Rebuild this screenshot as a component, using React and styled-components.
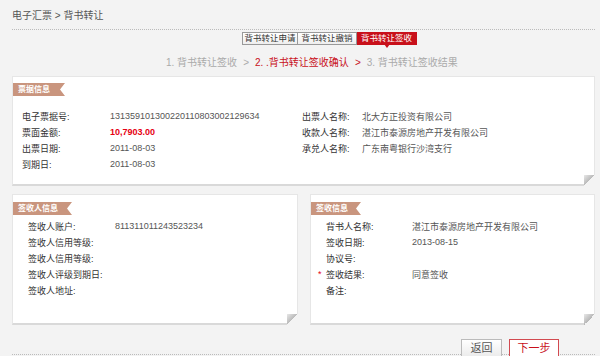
import styled, { createGlobalStyle } from 'styled-components'

const GlobalStyle = createGlobalStyle`
    html, body {
        margin: 0;
        padding: 0;
        background: #f3f3f3;
    }
    body {
        width: 600px;
        height: 356px;
        overflow: hidden;
        font-family: "Liberation Sans", "Noto Sans CJK SC", sans-serif;
    }
`;

const colors = {
    red: '#c8101a',
    ribbon: '#c9957e',
    label: '#333',
    value: '#555',
    muted: '#aaa',
};

const Wrapper = styled.div`
    display: flex;
    flex-direction: column;
    padding: 0 5px 0 12px;
`;

const Breadcrumb = styled.div`
    height: 30px;
    box-sizing: border-box;
    padding-top: 9px;
    font-size: 10px;
    line-height: 14px;
    color: #555;
    border-bottom: 1px dotted #bbb;
`;

const Tabs = styled.div`
    display: flex;
    margin-top: 2px;
    margin-left: 230px;
`;

const Tab = styled.div`
    position: relative;
    width: ${p => p.width}px;
    height: 13px;
    box-sizing: border-box;
    font-size: 8.5px;
    line-height: 11px;
    text-align: center;
    color: ${p => (p.active ? '#fff' : '#333')};
    background: ${p => (p.active ? colors.red : 'linear-gradient(#fff, #eee)')};
    border: 1px solid ${p => (p.active ? colors.red : '#999')};
    & + & {
        border-left: none;
    }
    ${p => p.active && `
        &::after {
            content: '';
            position: absolute;
            left: 50%;
            bottom: -4px;
            margin-left: -3px;
            border-left: 3px solid transparent;
            border-right: 3px solid transparent;
            border-top: 4px solid ${colors.red};
        }
    `}
`;

const Steps = styled.div`
    display: flex;
    gap: 6px;
    margin-top: 11px;
    margin-left: 154px;
    font-size: 10px;
    line-height: 14px;
    color: ${colors.muted};
`;

const Step = styled.span`
    color: ${p => (p.active ? colors.red : colors.muted)};
`;

const Panel = styled.div`
    position: relative;
    background: #fff;
    border: 1px solid #e6e6e6;
    border-bottom: 2px solid #d9d9d9;
    box-sizing: border-box;
    width: ${p => p.width || 583}px;
    height: ${p => p.height}px;
    padding-top: ${p => p.padTop}px;
    &::after {
        content: '';
        position: absolute;
        right: -1px;
        bottom: -2px;
        width: 11px;
        height: 11px;
        background: linear-gradient(315deg, #f3f3f3 50%, #b8b8b8 50%, #e8e8e8 100%);
    }
`;

const TopPanel = styled(Panel)`
    margin-top: 6px;
`;

const Ribbon = styled.div`
    width: ${p => p.width}px;
    height: 13px;
    padding-left: 5px;
    box-sizing: border-box;
    background: ${colors.ribbon};
    color: #fff;
    font-size: 8px;
    font-weight: bold;
    line-height: 13px;
    clip-path: polygon(0 0, 100% 0, calc(100% - 5px) 50%, 100% 100%, 0 100%);
`;

const InfoGrid = styled.div`
    display: grid;
    grid-template-columns: 280px 1fr;
    margin-top: 12px;
    padding-left: 9px;
`;

const Column = styled.div`
    display: flex;
    flex-direction: column;
`;

const Row = styled.div`
    position: relative;
    display: flex;
    height: 16px;
    align-items: center;
    font-size: 9px;
`;

const Label = styled.span`
    width: ${p => p.width}px;
    flex: none;
    color: ${colors.label};
`;

const Value = styled.span`
    color: ${p => (p.highlight ? '#e60012' : colors.value)};
    font-weight: ${p => (p.highlight ? 'bold' : 'normal')};
`;

const Required = styled.span`
    position: absolute;
    left: -8px;
    top: 3px;
    color: #e60012;
    font-size: 9px;
`;

const LowerRow = styled.div`
    display: flex;
    gap: 12px;
    margin-top: 8px;
`;

const FieldList = styled.div`
    display: flex;
    flex-direction: column;
    margin-top: 3px;
    padding-left: ${p => p.indent}px;
`;

const Footer = styled.div`
    display: flex;
    justify-content: flex-end;
    gap: 7px;
    height: 15px;
    margin-top: 14px;
    padding-right: 36px;
    border-bottom: 1px dotted #bbb;
`;

const Button = styled.div`
    width: ${p => p.width}px;
    height: 17px;
    flex: none;
    box-sizing: border-box;
    font-size: 11px;
    line-height: 16px;
    text-align: center;
    background: ${p => (p.primary ? '#fff' : 'linear-gradient(#fff, #ececec)')};
    color: ${p => (p.primary ? colors.red : '#555')};
    border: 1px solid ${p => (p.primary ? '#d24a50' : '#bbb')};
    border-bottom: none;
`;

const billLeft = [
    ['电子票据号:', '131359101300220110803002129634'],
    ['票面金额:', '10,7903.00', true],
    ['出票日期:', '2011-08-03'],
    ['到期日:', '2011-08-03'],
];

const billRight = [
    ['出票人名称:', '北大方正投资有限公司'],
    ['收款人名称:', '湛江市泰源房地产开发有限公司'],
    ['承兑人名称:', '广东南粤银行沙湾支行'],
];

const receiver = [
    ['签收人账户:', '811311011243523234'],
    ['签收人信用等级:', ''],
    ['签收人信用等级:', ''],
    ['签收人评级到期日:', ''],
    ['签收人地址:', ''],
];

const signInfo = [
    ['背书人名称:', '湛江市泰源房地产开发有限公司'],
    ['签收日期:', '2013-08-15'],
    ['协议号:', ''],
    ['签收结果:', '同意签收', false, true],
    ['备注:', ''],
];

function Fields({ rows, labelWidth }) {
    return rows.map(([label, value, highlight, required], i) => (
        <Row key={i}>
            {required && <Required>*</Required>}
            <Label width={labelWidth}>{label}</Label>
            <Value highlight={highlight}>{value}</Value>
        </Row>
    ));
}

export default function App() {
    return (
        <>
            <GlobalStyle />
            <Wrapper>
                <Breadcrumb>电子汇票 &gt; 背书转让</Breadcrumb>
                <Tabs>
                    <Tab width={56}>背书转让申请</Tab>
                    <Tab width={59}>背书转让撤销</Tab>
                    <Tab width={60} active>背书转让签收</Tab>
                </Tabs>
                <Steps>
                    <Step>1. 背书转让签收</Step>
                    <Step>&gt;</Step>
                    <Step active>2. .背书转让签收确认</Step>
                    <Step active>&gt;</Step>
                    <Step>3. 背书转让签收结果</Step>
                </Steps>
                <TopPanel height={110} padTop={6}>
                    <Ribbon width={52}>票据信息</Ribbon>
                    <InfoGrid>
                        <Column>
                            <Fields rows={billLeft} labelWidth={88} />
                        </Column>
                        <Column>
                            <Fields rows={billRight} labelWidth={60} />
                        </Column>
                    </InfoGrid>
                </TopPanel>
                <LowerRow>
                    <Panel width={286} height={131} padTop={7}>
                        <Ribbon width={59}>签收人信息</Ribbon>
                        <FieldList indent={15}>
                            <Fields rows={receiver} labelWidth={87} />
                        </FieldList>
                    </Panel>
                    <Panel width={285} height={131} padTop={7}>
                        <Ribbon width={50}>签收信息</Ribbon>
                        <FieldList indent={15}>
                            <Fields rows={signInfo} labelWidth={86} />
                        </FieldList>
                    </Panel>
                </LowerRow>
                <Footer>
                    <Button width={41}>返回</Button>
                    <Button width={50} primary>下一步</Button>
                </Footer>
            </Wrapper>
        </>
    );
}
